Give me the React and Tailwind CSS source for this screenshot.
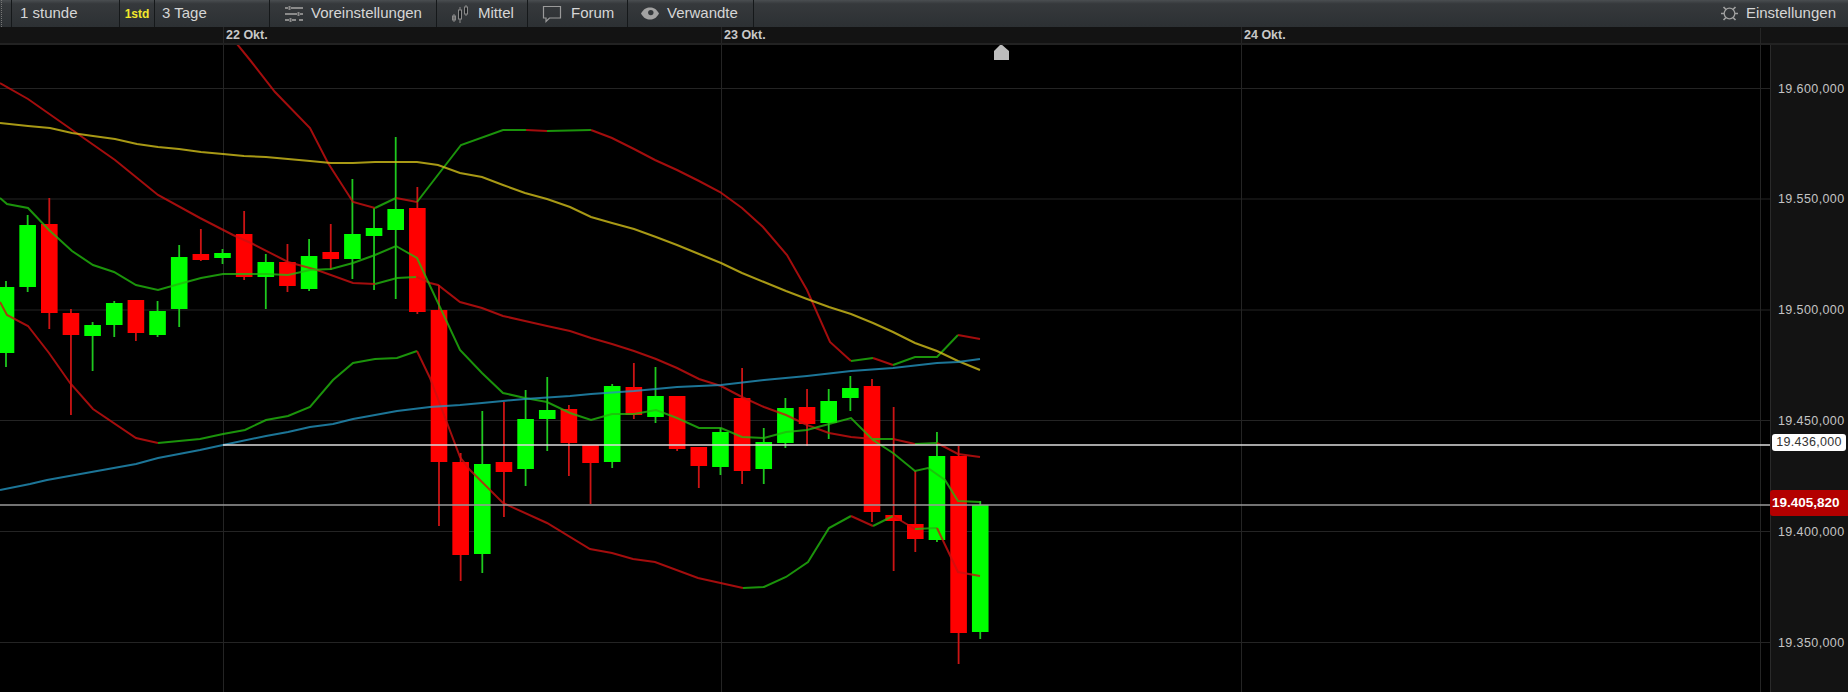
// App.jsx — candlestick chart window with toolbar, date header and price axis.
const UP = 'u';
const DOWN = 'd';

// [direction, bodyTop, bodyBottom, wickTop, wickBottom]
const candles = [
  [UP, 287, 353, 281, 367], [UP, 225, 287, 215, 292], [DOWN, 224, 313, 198, 329], [DOWN, 313, 335, 309, 415],
  [UP, 325, 336, 322, 371], [UP, 303, 325, 301, 337], [DOWN, 300, 333, 300, 341], [UP, 311, 335, 301, 337],
  [UP, 257, 309, 245, 327], [DOWN, 254, 260, 229, 261], [UP, 253, 258, 249, 264], [DOWN, 234, 277, 211, 280],
  [UP, 262, 277, 254, 309], [DOWN, 262, 286, 244, 292], [UP, 256, 289, 239, 291], [DOWN, 252, 259, 224, 270],
  [UP, 234, 259, 179, 279], [UP, 228, 236, 208, 290], [UP, 209, 230, 137, 299], [DOWN, 208, 312, 187, 314],
  [DOWN, 310, 462, 285, 526], [DOWN, 462, 555, 453, 581], [UP, 464, 554, 411, 573], [DOWN, 462, 472, 402, 517],
  [UP, 419, 469, 390, 486], [UP, 410, 419, 377, 451], [DOWN, 409, 443, 405, 476], [DOWN, 445, 463, 445, 504],
  [UP, 386, 462, 384, 468], [DOWN, 387, 415, 363, 419], [UP, 396, 417, 367, 423], [DOWN, 396, 449, 396, 451],
  [DOWN, 447, 466, 447, 488], [UP, 432, 467, 428, 475], [DOWN, 398, 471, 368, 484], [UP, 442, 469, 428, 484],
  [UP, 408, 443, 398, 448], [DOWN, 407, 424, 389, 446], [UP, 401, 423, 389, 439], [UP, 388, 398, 376, 411],
  [DOWN, 386, 512, 379, 522], [DOWN, 515, 521, 407, 571], [DOWN, 524, 539, 471, 552], [UP, 456, 540, 432, 542],
  [DOWN, 456, 633, 446, 664], [UP, 505, 632, 501, 639],
];

const RED = '#cc1010';
const GREEN = '#22b80e';
const YELLOW = '#d2bf1a';
const BLUE = '#2392bd';

const lines = [
  // outer upper band
  [RED, '237,44 250,60 275,92 310,128 328,163 353,202 375,208'],
  [GREEN, '375,208 396,198'],
  [RED, '396,198 417,202'],
  [GREEN, '417,202 461,145 503,130 526,130'],
  [RED, '526,130 547,131'],
  [GREEN, '547,131 591,130'],
  [RED, '591,130 612,138 634,149 655,160 677,170 699,181 720,192 742,208 763,227 787,255 807,290 830,342 851,361'],
  [GREEN, '851,361 873,358'],
  [RED, '873,358 893,365'],
  [GREEN, '893,365 915,357 937,357 958,335'],
  [RED, '958,335 980,339'],
  // inner upper band
  [RED, '0,83 28,99 115,160 158,195 200,218 233,235 253,244 288,262 317,270 353,283 375,284'],
  [GREEN, '375,284 397,278 416,277'],
  [RED, '417,277 430,283 438,285 460,302 482,308 503,316 525,321 547,326 570,331 591,338 612,344 634,351 656,359 677,368 699,379 721,386 742,397 764,407 786,415 807,425 829,433 851,437 873,439'],
  [GREEN, '873,439 893,439'],
  [RED, '893,439 915,444'],
  [GREEN, '915,444 937,443'],
  [RED, '937,443 958,454 980,457'],
  // middle band
  [GREEN, '0,198 7,204 28,208 49,230 72,251 93,265 114,272 136,285 158,290 179,284 201,278 223,274 244,274 266,274 288,275 310,270 331,269 353,263 375,255 396,246 417,258 460,350 482,373 503,393 525,398 547,402 570,413 591,420 612,414 634,414 656,410 677,418 699,428 721,428 742,437 764,438 786,432 807,430 829,424 851,418 873,440 893,453 915,471 928,468 945,480 958,501 980,502'],
  // lower band
  [RED, '0,302 7,315 28,326 49,353 70,383 93,409 136,438 158,443'],
  [GREEN, '158,443 200,439 223,434 245,430 266,420 288,416 310,407 333,380 353,363 375,359 397,358 417,351'],
  [RED, '417,351 430,378 460,457 470,470 503,503 547,523 590,549 612,553 633,559 655,562 698,578 743,588'],
  [GREEN, '743,588 764,587 786,577 808,562 829,528 851,516'],
  [RED, '851,516 873,526'],
  [GREEN, '873,526 893,516'],
  [RED, '893,516 915,529'],
  [GREEN, '915,529 937,528'],
  [RED, '937,528 958,572 980,576'],
  // moving averages
  [YELLOW, '0,123 28,126 50,128 72,133 93,136 115,139 137,144 158,147 179,149 201,152 223,154 244,156 266,157 288,159 310,161 331,163 353,163 375,162 396,162 417,162 438,165 460,173 482,177 503,185 525,193 547,199 570,207 591,217 612,223 634,229 656,237 677,245 699,254 721,263 742,273 764,282 786,291 807,299 829,307 851,314 873,323 893,332 915,343 937,351 958,361 980,370'],
  [BLUE, '0,490 30,484 47,480 136,464 158,458 200,450 223,445 266,436 288,432 310,427 333,424 353,419 397,411 430,407 460,405 482,403 503,401 525,399 570,396 591,394 634,391 677,387 721,385 764,380 807,376 851,371 893,368 937,363 958,362 980,359'],
];

const gridY = [88.5, 199, 310, 420.5, 531.5, 642.5];
const gridX = [223, 721, 1241];
const priceTicks = ['19.600,000', '19.550,000', '19.500,000', '19.450,000', '19.400,000', '19.350,000'];

function PresetIcon() {
  return (
    <svg width="20" height="18" viewBox="0 0 20 18" stroke="#8a8a8a" strokeWidth="2" fill="none">
      <path d="M1 3h3M7 3h12M5.500 1v4M1 9h12M16 9h3M14.500 7v4M1 15h4M8 15h4M6.500 13v4M15 15h4" />
    </svg>
  );
}

function CandleIcon() {
  return (
    <svg width="18" height="20" viewBox="0 0 18 20" stroke="#8a8a8a" fill="none">
      <path d="M3 10v8M9 3v16M15 1v11" />
      <rect x="1.500" y="12" width="3" height="4" fill="#6f6f6f" />
      <rect x="7.500" y="6" width="3" height="9" fill="#1c1f21" />
      <rect x="13.500" y="3" width="3" height="7" fill="#1c1f21" />
    </svg>
  );
}

function ChatIcon() {
  return (
    <svg width="20" height="18" viewBox="0 0 20 18" stroke="#9a9a9a" strokeWidth="1.200" fill="none">
      <path d="M1.500 1.500h17v11.500h-11l-3.500 3.500v-3.500h-2.500z" />
    </svg>
  );
}

function EyeIcon() {
  return (
    <svg width="18" height="13" viewBox="0 0 18 13">
      <path d="M0 6.500c2.500-4.500 5.500-6 9-6s6.500 1.500 9 6c-2.500 4.500-5.500 6-9 6s-6.500-1.500-9-6z" fill="#a2a2a2" />
      <circle cx="9.800" cy="5.600" r="2.700" fill="#34383b" />
    </svg>
  );
}

function SettingsIcon() {
  return (
    <svg width="17" height="17" viewBox="0 0 17 17" stroke="#a0a0a0" fill="none">
      <circle cx="8.500" cy="8.500" r="5.300" strokeWidth="1.300" />
      <path d="M0 8.500h3M14 8.500h3M2.500 2l2.500 2.500M14.500 2l-2.500 2.500M2.500 15l2.500-2.500M14.500 15l-2.500-2.500" strokeWidth="1.700" />
    </svg>
  );
}

function ToolItem({ className, icon, children }) {
  return (
    <div className={`flex h-full shrink-0 items-center border-r border-[#15181a] ${className}`}>
      {icon}
      <span>{children}</span>
    </div>
  );
}

function Toolbar() {
  return (
    <div className="flex h-[27px] shrink-0 items-center bg-gradient-to-b from-[#4a4e51] via-[#36393c] via-[14%] to-[#2c3033] text-[15px] text-[#d6d6d6]">
      <div className="flex h-full w-[12px] shrink-0 border-r border-[#15181a]">
        <div className="h-full w-[2px] border-r border-dotted border-[#777]" />
      </div>
      <ToolItem className="w-[108px] pl-[8px]">1 stunde</ToolItem>
      <div className="flex h-full w-[35px] shrink-0 items-center justify-center border-r border-[#15181a] text-[12px] font-bold text-[#f2e82c]">
        1std
      </div>
      <ToolItem className="w-[115px] pl-[7px]">3 Tage</ToolItem>
      <ToolItem className="w-[167px] gap-[7px] pl-[14px]" icon={<PresetIcon />}>Voreinstellungen</ToolItem>
      <ToolItem className="w-[91px] gap-[9px] pl-[14px]" icon={<CandleIcon />}>Mittel</ToolItem>
      <ToolItem className="w-[100px] gap-[9px] pl-[14px]" icon={<ChatIcon />}>Forum</ToolItem>
      <ToolItem className="w-[126px] gap-[8px] pl-[13px]" icon={<EyeIcon />}>Verwandte</ToolItem>
      <div className="ml-auto flex items-center gap-[8px] pr-[12px]">
        <SettingsIcon />
        <span>Einstellungen</span>
      </div>
    </div>
  );
}

function DateHeader() {
  return (
    <div className="relative h-[18px] shrink-0 border-b-2 border-[#222] bg-[#131313] text-[12.500px] leading-[16px] font-bold text-[#c8c8c8]">
      {gridX.map((x) => (
        <div key={x} className="absolute top-0 h-full w-px bg-[#262626]" style={{ left: x }} />
      ))}
      <div className="absolute top-[1px] h-full w-px bg-[#262626] left-[1760px]" />
      <span className="absolute top-0 left-[226px]">22 Okt.</span>
      <span className="absolute top-0 left-[724px]">23 Okt.</span>
      <span className="absolute top-0 left-[1244px]">24 Okt.</span>
    </div>
  );
}

function Chart() {
  return (
    <svg className="block h-full w-[1770px] shrink-0 bg-black" viewBox="0 45 1770 647">
      {gridY.map((y) => (
        <line key={y} x1="0" x2="1770" y1={y} y2={y} stroke="#242424" />
      ))}
      {gridX.map((x) => (
        <line key={x} x1={x + 0.5} x2={x + 0.5} y1="45" y2="692" stroke="#242424" />
      ))}
      <line x1="1760.500" x2="1760.500" y1="45" y2="692" stroke="#242424" />
      {candles.map(([dir, top, bottom, wickTop, wickBottom], i) => {
        const x = 6 + i * 21.65;
        return (
          <g key={i}>
            <line x1={x} x2={x} y1={wickTop} y2={wickBottom} stroke={dir === UP ? '#1ec81e' : '#cc1414'} strokeWidth="1.800" />
            <rect x={x - 8.3} y={top} width="16.600" height={bottom - top} fill={dir === UP ? '#00ff00' : '#ff0000'} />
          </g>
        );
      })}
      {lines.map(([color, points], i) => (
        <polyline key={i} points={points} fill="none" stroke={color} strokeWidth="2" strokeOpacity="0.8" />
      ))}
      <line x1="223" x2="1770" y1="445" y2="445" stroke="#dcdcdc" strokeWidth="1.500" />
      <line x1="0" x2="1770" y1="505" y2="505" stroke="#9a9a9a" strokeWidth="1.500" />
      <polygon points="1001,44 1009,51 1009,60 994,60 994,51" fill="#bdbdbd" />
    </svg>
  );
}

function PriceAxis() {
  return (
    <div className="relative h-full flex-1 border-l border-[#2a2a2a] bg-[#131313] text-[12.500px] tracking-[0.4px] text-[#c4c4c4]">
      {priceTicks.map((label, i) => (
        <span key={label} className="absolute left-[7px] -translate-y-1/2" style={{ top: gridY[i] - 45 }}>
          {label}
        </span>
      ))}
    </div>
  );
}

export default function App() {
  return (
    <div className="relative flex h-[692px] w-[1848px] flex-col overflow-hidden bg-black font-['Liberation_Sans',Arial,sans-serif]">
      <Toolbar />
      <DateHeader />
      <div className="flex min-h-0 flex-1">
        <Chart />
        <PriceAxis />
      </div>
      <div className="absolute top-[434px] left-[1772px] flex h-[17px] w-[74px] items-center justify-center rounded-[3px] bg-white text-[12.500px] tracking-[0.3px] text-[#333]">
        19.436,000
      </div>
      <div className="absolute top-[490px] left-[1770px] flex h-[26px] w-[78px] items-center rounded-l-[3px] bg-[#b30000] pl-[2px] text-[13.500px] font-bold text-white">
        19.405,820
      </div>
    </div>
  );
}
